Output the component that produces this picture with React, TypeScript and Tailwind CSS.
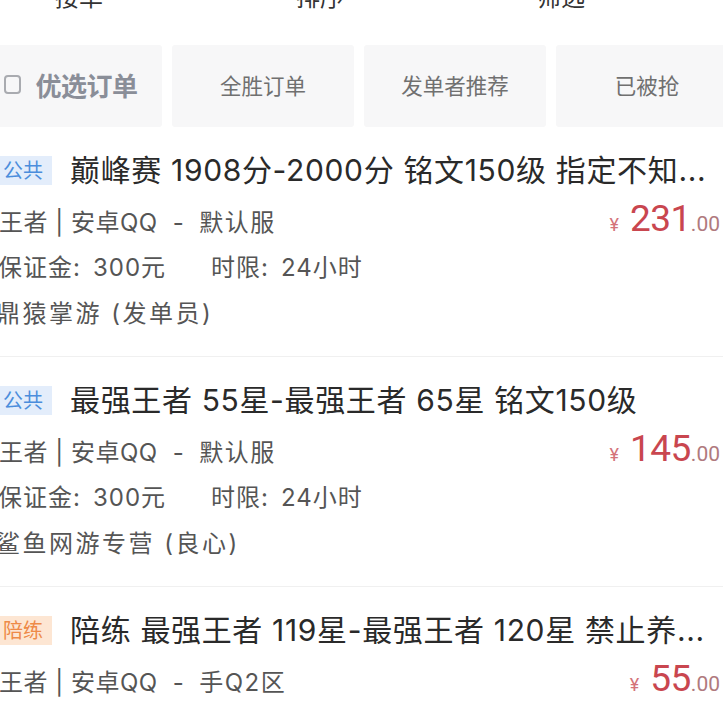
import React from "react";

type Item = {
  tag: string;
  tagType: "blue" | "orange";
  title: string;
  server: string;
  zone: string;
  price: string;
  deposit: string;
  limit: string;
  publisher: string;
};

const items: Item[] = [
  {
    tag: "公共",
    tagType: "blue",
    title: "巅峰赛 1908分-2000分 铭文150级 指定不知...",
    server: "王者 | 安卓QQ",
    zone: "默认服",
    price: "231",
    deposit: "300元",
    limit: "24小时",
    publisher: "鼎猿掌游 (发单员)",
  },
  {
    tag: "公共",
    tagType: "blue",
    title: "最强王者 55星-最强王者 65星 铭文150级",
    server: "王者 | 安卓QQ",
    zone: "默认服",
    price: "145",
    deposit: "300元",
    limit: "24小时",
    publisher: "鲨鱼网游专营 (良心)",
  },
  {
    tag: "陪练",
    tagType: "orange",
    title: "陪练 最强王者 119星-最强王者 120星 禁止养...",
    server: "王者 | 安卓QQ",
    zone: "手Q2区",
    price: "55",
    deposit: "300元",
    limit: "24小时",
    publisher: "鲨鱼网游专营 (良心)",
  },
];

function Caret() {
  return (
    <svg width="12" height="8" viewBox="0 0 12 8" className="ml-[22px]">
      <path d="M1 1 L6 6 L11 1" fill="none" stroke="#999" strokeWidth="2" />
    </svg>
  );
}

function Listing({ item }: { item: Item }) {
  const tagCls =
    item.tagType === "blue"
      ? "bg-[#e3edfb] text-[#4b8ddc]"
      : "bg-[#fde6d3] text-[#ee8a48]";
  return (
    <div className="pt-[27px] pb-[19px] border-b border-[#f0f0f0]">
      <div className="flex items-center h-[32px]">
        <span
          className={`-ml-[6px] pl-[9px] pr-[9px] h-[29px] flex items-center text-[20px] leading-none shrink-0 font-['Noto_Sans_CJK_SC',sans-serif] ${tagCls}`}
        >
          {item.tag}
        </span>
        <span className="ml-[18px] text-[30px] leading-[32px] text-[#2a2a2a] whitespace-nowrap tracking-[0.65px]">
          {item.title}
        </span>
      </div>
      <div className="mt-[10px] text-[24px] text-[#555] leading-[46px] tracking-[0.5px]">
        <div className="flex items-baseline justify-between h-[49px] pr-[3px]">
          <span className="flex whitespace-nowrap -ml-[1px]">
            <span>{item.server}</span>
            <span className="mx-[15px]">-</span>
            <span className="tracking-[1.5px]">{item.zone}</span>
          </span>
          <span className="flex items-baseline font-['Roboto','Noto_Sans',sans-serif] tracking-normal">
            <span className="text-[18px] text-[#d4737a] mr-[11px]">¥</span>
            <span className="text-[37px] text-[#c9464f] tracking-[-0.5px]">{item.price}</span>
            <span className="text-[21px] text-[#b07a7e]">.00</span>
          </span>
        </div>
        <div className="flex h-[46px] whitespace-nowrap -ml-[2px] tracking-[1px]">
          <span>保证金:</span>
          <span className="ml-[12px]">{item.deposit}</span>
          <span className="ml-[45px]">时限:</span>
          <span className="ml-[12px]">{item.limit}</span>
        </div>
        <div className="h-[46px] whitespace-nowrap -ml-[4px] tracking-[2.5px]">{item.publisher}</div>
      </div>
    </div>
  );
}

export default function App() {
  return (
    <div className="w-[723px] h-[711px] overflow-hidden bg-white font-['Inter','Noto_Sans_CJK_SC',sans-serif]">
      <div className="h-[10px] overflow-hidden">
        <div className="flex -mt-[17px] h-[26px] text-[24px] leading-[26px] text-[#333] font-['Noto_Sans_CJK_SC',sans-serif]">
          <div className="flex items-center pl-[55px] w-[260px]">
            <span>接单</span>
            <Caret />
          </div>
          <div className="flex items-center pl-[55px] w-[260px]">
            <span>排序</span>
            <Caret />
          </div>
          <div className="flex items-center pl-[55px] w-[260px]">
            <span>筛选</span>
            <Caret />
          </div>
        </div>
      </div>
      <div className="mt-[35px] flex gap-[10px] -ml-[20px] font-['Noto_Sans_CJK_SC',sans-serif]">
        <div className="w-[182px] h-[82px] shrink-0 bg-[#f7f7f8] rounded-[3px] flex items-center justify-center">
          <span className="block shrink-0 w-[17px] h-[19px] border-[2px] border-[#a9abb0] rounded-[4px] mr-[14px] -mt-[4px]" />
          <span className="text-[26px] font-bold text-[#8a8e98] tracking-[-0.5px] -mt-[4px]">优选订单</span>
        </div>
        <div className="w-[182px] h-[82px] shrink-0 bg-[#f7f7f8] rounded-[3px] flex items-center justify-center">
          <span className="text-[21.5px] text-[#707070] -mt-[2px]">全胜订单</span>
        </div>
        <div className="w-[182px] h-[82px] shrink-0 bg-[#f7f7f8] rounded-[3px] flex items-center justify-center">
          <span className="text-[21.5px] text-[#707070] -mt-[2px]">发单者推荐</span>
        </div>
        <div className="w-[182px] h-[82px] shrink-0 bg-[#f7f7f8] rounded-[3px] flex items-center justify-center">
          <span className="text-[21.5px] text-[#707070] -mt-[2px]">已被抢</span>
        </div>
      </div>
      <div>
        {items.map((it, i) => (
          <Listing key={i} item={it} />
        ))}
      </div>
    </div>
  );
}
